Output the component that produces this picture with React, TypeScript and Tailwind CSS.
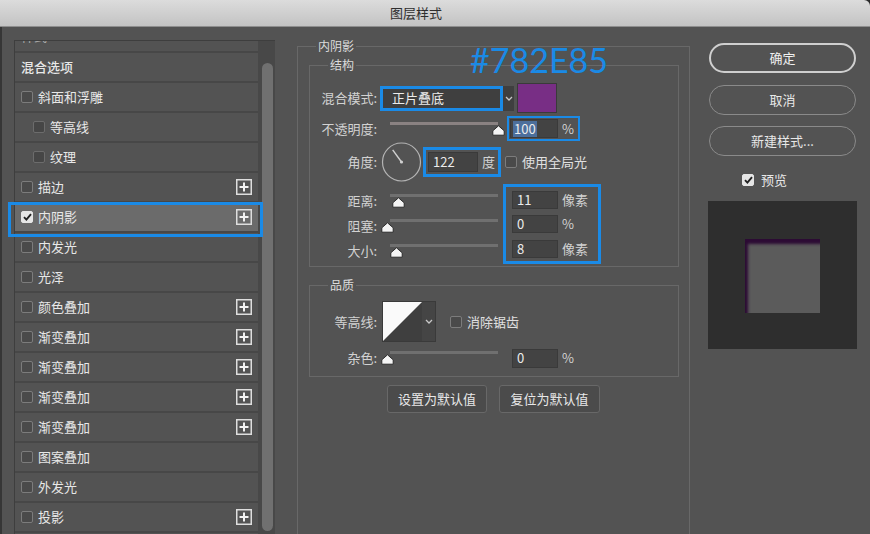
import React from "react";

type Item = {
  label: string;
  head?: boolean;
  indent?: boolean;
  plus?: boolean;
  checked?: boolean;
  selected?: boolean;
};

const items: Item[] = [
  { label: "混合选项", head: true },
  { label: "斜面和浮雕" },
  { label: "等高线", indent: true },
  { label: "纹理", indent: true },
  { label: "描边", plus: true },
  { label: "内阴影", plus: true, checked: true, selected: true },
  { label: "内发光" },
  { label: "光泽" },
  { label: "颜色叠加", plus: true },
  { label: "渐变叠加", plus: true },
  { label: "渐变叠加", plus: true },
  { label: "渐变叠加", plus: true },
  { label: "渐变叠加", plus: true },
  { label: "图案叠加" },
  { label: "外发光" },
  { label: "投影", plus: true },
];

function Check({ checked = false, dim = false }: { checked?: boolean; dim?: boolean }) {
  return (
    <span
      className={`flex h-[12px] w-[12px] shrink-0 items-center justify-center rounded-[2px] border ${
        checked
          ? "border-[#e6e6e6] bg-[#e6e6e6]"
          : dim
            ? "border-[#6c6c6c] bg-[#464646]"
            : "border-[#7c7c7c] bg-[#4a4a4a]"
      }`}
    >
      {checked && (
        <svg width="9" height="8" viewBox="0 0 9 8">
          <path d="M1 4.2 L3.4 6.6 L8 1.2" fill="none" stroke="#222" strokeWidth="1.9" />
        </svg>
      )}
    </span>
  );
}

function PlusBox() {
  return (
    <svg width="16" height="16" viewBox="0 0 16 16" className="shrink-0">
      <rect x="0.75" y="0.75" width="14.5" height="14.5" fill="none" stroke="#dedede" strokeWidth="1.5" />
      <path d="M8 3.5v9M3.5 8h9" stroke="#f2f2f2" strokeWidth="2" />
    </svg>
  );
}

function Chevron() {
  return (
    <svg width="8" height="5" viewBox="0 0 8 5">
      <path d="M1 1 L4 4 L7 1" fill="none" stroke="#c8c8c8" strokeWidth="1.3" />
    </svg>
  );
}

// thumb position is given in px from the track start
function Slider({ pos, tint = false }: { pos: number; tint?: boolean }) {
  return (
    <div className="relative ml-[13px] h-[20px] w-[108px] shrink-0">
      <div className={`absolute left-0 right-0 top-[3px] h-[3px] ${tint ? "bg-[#8a8282]" : "bg-[#707070]"}`} />
      <svg
        width="13"
        height="11"
        viewBox="0 0 13 11"
        className="absolute top-[6px]"
        style={{ left: pos - 6.5 }}
      >
        <path
          d="M6.5 0.8 L12.2 5.8 V10.2 H0.8 V5.8 Z"
          fill="#f4f4f4"
          stroke="#2a2a2a"
          strokeWidth="1"
          strokeLinejoin="round"
        />
      </svg>
    </div>
  );
}

function NumBox({ value, w = "w-[46px]", h = "h-[18px]" }: { value: string; w?: string; h?: string }) {
  return (
    <div className={`flex ${w} ${h} shrink-0 items-center border border-[#3a3a3a] bg-[#434343] pl-[4px] text-[13px] leading-[16px] text-[#ececec]`}>
      {value}
    </div>
  );
}

function Label({ children }: { children: React.ReactNode }) {
  return (
    <div className="w-[67px] shrink-0 text-right text-[13px] leading-[16px] text-[#d2d2d2]">{children}</div>
  );
}

function Dial() {
  const a = (126 * Math.PI) / 180;
  const x2 = 20.5 + Math.cos(a) * 15;
  const y2 = 20 - Math.sin(a) * 15;
  return (
    <svg width="41" height="40" viewBox="0 0 41 40" className="ml-[4px] shrink-0">
      <circle cx="20.5" cy="20" r="19" fill="none" stroke="#b4b4b4" strokeWidth="1.2" />
      <path d={`M20.5 20 L${x2} ${y2}`} stroke="#d0d0d0" strokeWidth="1.4" />
      <circle cx="20.5" cy="20" r="1.6" fill="#d0d0d0" />
    </svg>
  );
}

function ListRow({ item }: { item: Item }) {
  return (
    <div
      className={`relative flex h-[30px] shrink-0 items-center border-b-2 border-[#474747] pr-[6px] ${
        item.indent ? "pl-[18px]" : "pl-[6px]"
      } ${item.selected ? "bg-[#6b6b6b]" : ""}`}
    >
      {!item.head && <Check checked={item.checked} dim={item.indent} />}
      <span
        className={`text-[13px] leading-[16px] text-[#e8e8e8] ${item.head ? "font-medium" : "ml-[5px]"}`}
      >
        {item.label}
      </span>
      {item.plus && (
        <span className="ml-auto">
          <PlusBox />
        </span>
      )}
      {item.selected && (
        <span className="pointer-events-none absolute -bottom-[6px] -left-[7px] -right-[5px] -top-[1px] z-10 border-[3px] border-[#1a8ae6]" />
      )}
    </div>
  );
}

export default function App() {
  return (
    <div className="relative flex h-[534px] w-[870px] flex-col overflow-hidden bg-[#2a2a2a] font-['Noto_Sans_CJK_SC','Noto_Sans',sans-serif]">
      {/* title bar */}
      <div className="flex h-[27px] shrink-0 items-center rounded-tr-[6px] border-b border-[#8e8e8e] bg-gradient-to-b from-[#dcdcdc] to-[#c3c3c3] pl-[390px] text-[13px] leading-[16px] text-[#2e2e2e]">
        图层样式
      </div>

      <div className="flex flex-1 bg-[#535353]">
        {/* style list */}
        <div className="flex w-[297px] shrink-0">
          <div className="w-[2px] bg-[#363636]" />
          <div className="ml-[12px] mt-[13px] flex w-[261px] border-l border-t border-[#3e3e3e]">
            <div className="flex w-[243px] flex-col">
              <div className="h-[12px] shrink-0 overflow-hidden border-b-2 border-[#474747]">
                <div className="-mt-[15px] pl-[6px] text-[13px] leading-[20px] text-[#aaa]">样式</div>
              </div>
              {items.map((item, i) => (
                <ListRow key={i} item={item} />
              ))}
            </div>
            <div className="w-[17px] shrink-0 bg-[#484848] pl-[4px] pt-[22px]">
              <div className="h-[468px] w-[11px] rounded-full bg-[#707070]" />
            </div>
          </div>
        </div>

        {/* settings */}
        <div className="w-[393px] shrink-0 pt-[11px]">
          <fieldset className="h-[540px] border border-[#686868] pl-[11px] pr-[10px]">
            <legend className="ml-[7px] px-[2px] text-[12px] leading-[16px] text-[#dcdcdc]">内阴影</legend>

            <fieldset className="mt-[3px] border border-[#686868] pb-[2px]">
              <legend className="ml-[18px] px-[2px] text-[12px] leading-[16px] text-[#dcdcdc]">结构</legend>

              <div className="mt-[10px] flex h-[30px] items-center">
                <Label>混合模式:</Label>
                <div className="ml-[3px] flex h-[25px] w-[134px] bg-[#3f3f3f]">
                  <div className="flex h-full w-[123px] items-center border-[3px] border-[#1a8ae6] pl-[9px] text-[13px] leading-[16px] text-[#ececec]">
                    正片叠底
                  </div>
                  <div className="flex flex-1 items-center justify-center">
                    <Chevron />
                  </div>
                </div>
                <div className="ml-[3px] h-[30px] w-[40px] border border-[#3a3a3a] bg-[#782E85]" />
              </div>

              <div className="mt-[3px] flex h-[25px] items-center">
                <Label>不透明度:</Label>
                <Slider pos={108} tint />
                <div className="ml-[9px] flex h-[25px] items-center border-2 border-[#1a8ae6] pl-[1px] pr-[4px]">
                  <div className="flex h-[19px] w-[48px] items-center border border-[#3a3a3a] bg-[#434343] pl-[2px] text-[13px] leading-[16px] text-[#ececec]">
                    <span className="bg-[#4c6f9c] px-[1px]">100</span>
                  </div>
                  <span className="ml-[4px] text-[13px] leading-[16px] text-[#d2d2d2]">%</span>
                </div>
              </div>

              <div className="mt-[1px] flex h-[40px] items-center">
                <Label>角度:</Label>
                <Dial />
                <div className="ml-[1px] flex h-[30px] items-center border-[3px] border-[#1a8ae6] pl-[2px] pr-[3px]">
                  <NumBox value="122" w="w-[50px]" h="h-[20px]" />
                  <span className="ml-[4px] text-[13px] leading-[16px] text-[#d2d2d2]">度</span>
                </div>
                <span className="ml-[4px]">
                  <Check />
                </span>
                <span className="ml-[5px] text-[13px] leading-[16px] text-[#e0e0e0]">使用全局光</span>
              </div>

              <div className="mt-[2px] flex">
                <div className="flex flex-col pt-[4px]">
                  {[
                    ["距离:", 8],
                    ["阻塞:", -3],
                    ["大小:", 6],
                  ].map(([l, p]) => (
                    <div key={l as string} className="flex h-[25px] items-center">
                      <Label>{l}</Label>
                      <Slider pos={p as number} />
                    </div>
                  ))}
                </div>
                <div className="ml-[5px] flex h-[80px] w-[98px] flex-col border-[3px] border-[#1a8ae6] pt-[1px]">
                  {[
                    ["11", "像素"],
                    ["0", "%"],
                    ["8", "像素"],
                  ].map(([v, u], i) => (
                    <div key={i} className="flex h-[25px] items-center pl-[6px]">
                      <NumBox value={v} />
                      <span className="ml-[4px] text-[13px] leading-[16px] text-[#d2d2d2]">{u}</span>
                    </div>
                  ))}
                </div>
              </div>
            </fieldset>

            <fieldset className="mt-[10px] border border-[#686868] pb-[8px]">
              <legend className="ml-[18px] px-[2px] text-[12px] leading-[16px] text-[#dcdcdc]">品质</legend>

              <div className="mt-[8px] flex h-[41px] items-center">
                <Label>等高线:</Label>
                <div className="ml-[5px] flex h-[41px] border border-[#3a3a3a]">
                  <svg width="39" height="39" viewBox="0 0 39 39">
                    <rect width="39" height="39" fill="#3f3f3f" />
                    <path d="M0 0 H39 L0 39 Z" fill="#fafafa" />
                  </svg>
                  <div className="flex w-[13px] items-center justify-center bg-[#454545]">
                    <Chevron />
                  </div>
                </div>
                <span className="ml-[14px]">
                  <Check />
                </span>
                <span className="ml-[5px] text-[13px] leading-[16px] text-[#e0e0e0]">消除锯齿</span>
              </div>

              <div className="mt-[6px] flex h-[20px] items-center">
                <Label>杂色:</Label>
                <Slider pos={-3} />
                <span className="ml-[14px]">
                  <NumBox value="0" h="h-[19px]" />
                </span>
                <span className="ml-[4px] text-[13px] leading-[16px] text-[#d2d2d2]">%</span>
              </div>
            </fieldset>

            <div className="ml-[78px] mt-[8px] flex gap-[12px]">
              <button className="h-[28px] w-[100px] rounded-[3px] border border-[#686868] bg-[#4b4b4b] text-[13px] leading-[16px] text-[#e8e8e8]">
                设置为默认值
              </button>
              <button className="h-[28px] w-[101px] rounded-[3px] border border-[#686868] bg-[#4b4b4b] text-[13px] leading-[16px] text-[#e8e8e8]">
                复位为默认值
              </button>
            </div>
          </fieldset>
        </div>

        {/* buttons and preview */}
        <div className="flex flex-1 flex-col pl-[18px]">
          <button className="ml-[1px] mt-[16px] h-[30px] w-[147px] rounded-full border-2 border-[#cfcfcf] text-[13px] leading-[16px] text-[#f0f0f0]">
            确定
          </button>
          <button className="ml-[1px] mt-[12px] h-[30px] w-[147px] rounded-full border-[1.5px] border-[#8a8a8a] text-[13px] leading-[16px] text-[#e8e8e8]">
            取消
          </button>
          <button className="ml-[1px] mt-[11px] h-[30px] w-[147px] rounded-full border-[1.5px] border-[#8a8a8a] text-[13px] leading-[16px] text-[#e8e8e8]">
            新建样式...
          </button>
          <div className="ml-[34px] mt-[17px] flex h-[13px] items-center">
            <Check checked />
            <span className="ml-[7px] text-[13px] leading-[16px] text-[#e8e8e8]">预览</span>
          </div>
          <div className="mt-[15px] h-[148px] w-[149px] bg-[#2e2e2e] pl-[37px] pt-[38px]">
            <div className="h-[74px] w-[75px] bg-[#5b5b5b] shadow-[inset_3px_5px_3px_#2c0b34]" />
          </div>
        </div>
      </div>

      {/* colour annotation */}
      <div className="absolute left-[470px] top-[40px] font-['Lato',sans-serif] text-[34px] leading-[40px] text-[#1a8ae6]">
        #782E85
      </div>
    </div>
  );
}
